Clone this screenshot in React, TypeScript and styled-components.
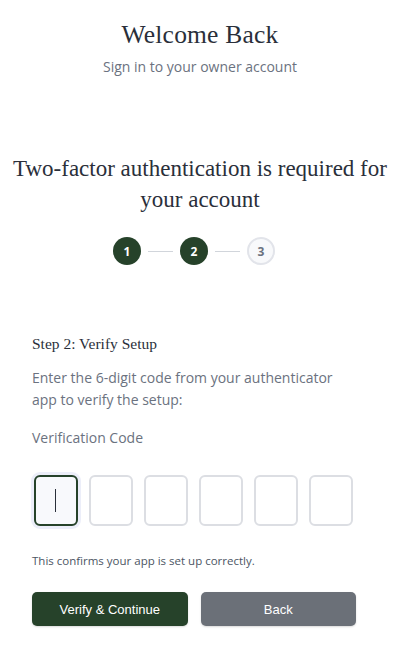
import React, { useState } from "react";
import styled, { createGlobalStyle } from "styled-components";

const GlobalStyle = createGlobalStyle`
  * { box-sizing: border-box; }
  body {
    margin: 0;
    background: #ffffff;
    font-family: "Open Sans", "Noto Sans", sans-serif;
  }
`;

const green = "#26422a";

const Page = styled.div`
  width: 400px;
  min-height: 652px;
  display: flex;
  flex-direction: column;
  background: #ffffff;
`;

const Header = styled.header`
  display: flex;
  flex-direction: column;
  align-items: center;
  padding-top: 18px;
`;

const Title = styled.h1`
  margin: 0;
  font-family: "Liberation Serif", "DejaVu Serif", serif;
  font-size: 25.5px;
  font-weight: 400;
  line-height: 34px;
  color: #2a2f3a;
  letter-spacing: 0.2px;
`;

const Subtitle = styled.p`
  margin: 6px 0 0;
  font-size: 14px;
  line-height: 18px;
  color: #6b7280;
`;

const Notice = styled.h2`
  margin: 77px 0 0;
  padding: 0 8px;
  text-align: center;
  font-family: "Liberation Serif", "DejaVu Serif", serif;
  font-size: 23px;
  font-weight: 400;
  line-height: 31px;
  color: #2a2f3a;
`;

const Content = styled.div`
  display: flex;
  flex-direction: column;
  padding: 0 44px 0 32px;
`;

const Stepper = styled.div`
  display: flex;
  justify-content: center;
  align-items: center;
  gap: 7px;
  margin-top: 22px;
`;

const StepDot = styled.div<{ $done: boolean }>`
  width: 28px;
  height: 28px;
  border-radius: 50%;
  display: flex;
  align-items: center;
  justify-content: center;
  font-size: 12px;
  font-weight: 700;
  color: ${(p) => (p.$done ? "#ffffff" : "#6b7280")};
  background: ${(p) => (p.$done ? green : "#f8f9fb")};
  border: ${(p) => (p.$done ? "none" : "2px solid #e2e4ea")};
`;

const StepLine = styled.div`
  width: 25px;
  height: 1px;
  background: #d1d5db;
`;

const Form = styled.section`
  display: flex;
  flex-direction: column;
  margin-top: 69px;
`;

const StepTitle = styled.h3`
  margin: 0;
  font-family: "Liberation Serif", "DejaVu Serif", serif;
  font-size: 15.5px;
  font-weight: 400;
  line-height: 20px;
  color: #2a2f3a;
`;

const Text = styled.p`
  margin: 13px 0 0;
  font-size: 14px;
  line-height: 22px;
  color: #6b7280;
`;

const Label = styled.label`
  margin-top: 17px;
  font-size: 14px;
  line-height: 20px;
  color: #6b7280;
`;

const CodeRow = styled.div`
  display: flex;
  gap: 11px;
  margin-top: 27px;
  padding-left: 2px;
`;

const CodeBox = styled.input<{ $active: boolean }>`
  width: 44px;
  height: 51px;
  border-radius: 6px;
  text-align: center;
  font-size: 20px;
  font-family: "Open Sans", sans-serif;
  color: #2a2f3a;
  outline: none;
  padding: 0;
  caret-color: transparent;
  background: ${(p) => (p.$active ? "#f8f9fc" : "#ffffff")};
  border: ${(p) => (p.$active ? `2px solid ${green}` : "2px solid #dcdee3")};
  box-shadow: ${(p) => (p.$active ? "0 0 0 3px rgba(147, 163, 220, 0.18)" : "none")};
`;

const BoxWrap = styled.div`
  position: relative;
  display: flex;
`;

const Caret = styled.span`
  position: absolute;
  left: 21px;
  top: 14px;
  width: 1px;
  height: 23px;
  background: #2a2f3a;
`;

const Hint = styled.p`
  margin: 28px 0 0;
  font-size: 11.5px;
  line-height: 14px;
  color: #4b5563;
`;

const Buttons = styled.div`
  display: flex;
  gap: 13px;
  margin-top: 24px;
`;

const Button = styled.button<{ $primary?: boolean }>`
  width: 156px;
  height: 34px;
  border: none;
  border-radius: 5px;
  font-family: "Liberation Sans", Arial, sans-serif;
  font-size: 13px;
  color: #ffffff;
  cursor: pointer;
  background: ${(p) => (p.$primary ? green : "#6b7078")};
  box-shadow: 0 1px 2px rgba(0, 0, 0, 0.15);
`;

const App: React.FC = () => {
  const [code, setCode] = useState<string[]>(["", "", "", "", "", ""]);

  const setDigit = (i: number, v: string) => {
    const next = [...code];
    next[i] = v.slice(-1);
    setCode(next);
  };

  return (
    <Page>
      <GlobalStyle />
      <Header>
        <Title>Welcome Back</Title>
        <Subtitle>Sign in to your owner account</Subtitle>
      </Header>

      <Notice>Two-factor authentication is required for your account</Notice>

      <Content>
        <Stepper>
          <StepDot $done>1</StepDot>
          <StepLine />
          <StepDot $done>2</StepDot>
          <StepLine />
          <StepDot $done={false}>3</StepDot>
        </Stepper>

        <Form>
          <StepTitle>Step 2: Verify Setup</StepTitle>
          <Text>Enter the 6-digit code from your authenticator app to verify the setup:</Text>
          <Label>Verification Code</Label>
          <CodeRow>
            {code.map((d, i) => (
              <BoxWrap key={i}>
                <CodeBox
                  $active={i === 0}
                  value={d}
                  maxLength={1}
                  inputMode="numeric"
                  onChange={(e) => setDigit(i, e.target.value)}
                />
                {i === 0 && !d && <Caret />}
              </BoxWrap>
            ))}
          </CodeRow>
          <Hint>This confirms your app is set up correctly.</Hint>
          <Buttons>
            <Button $primary>Verify &amp; Continue</Button>
            <Button>Back</Button>
          </Buttons>
        </Form>
      </Content>
    </Page>
  );
};

export default App;
